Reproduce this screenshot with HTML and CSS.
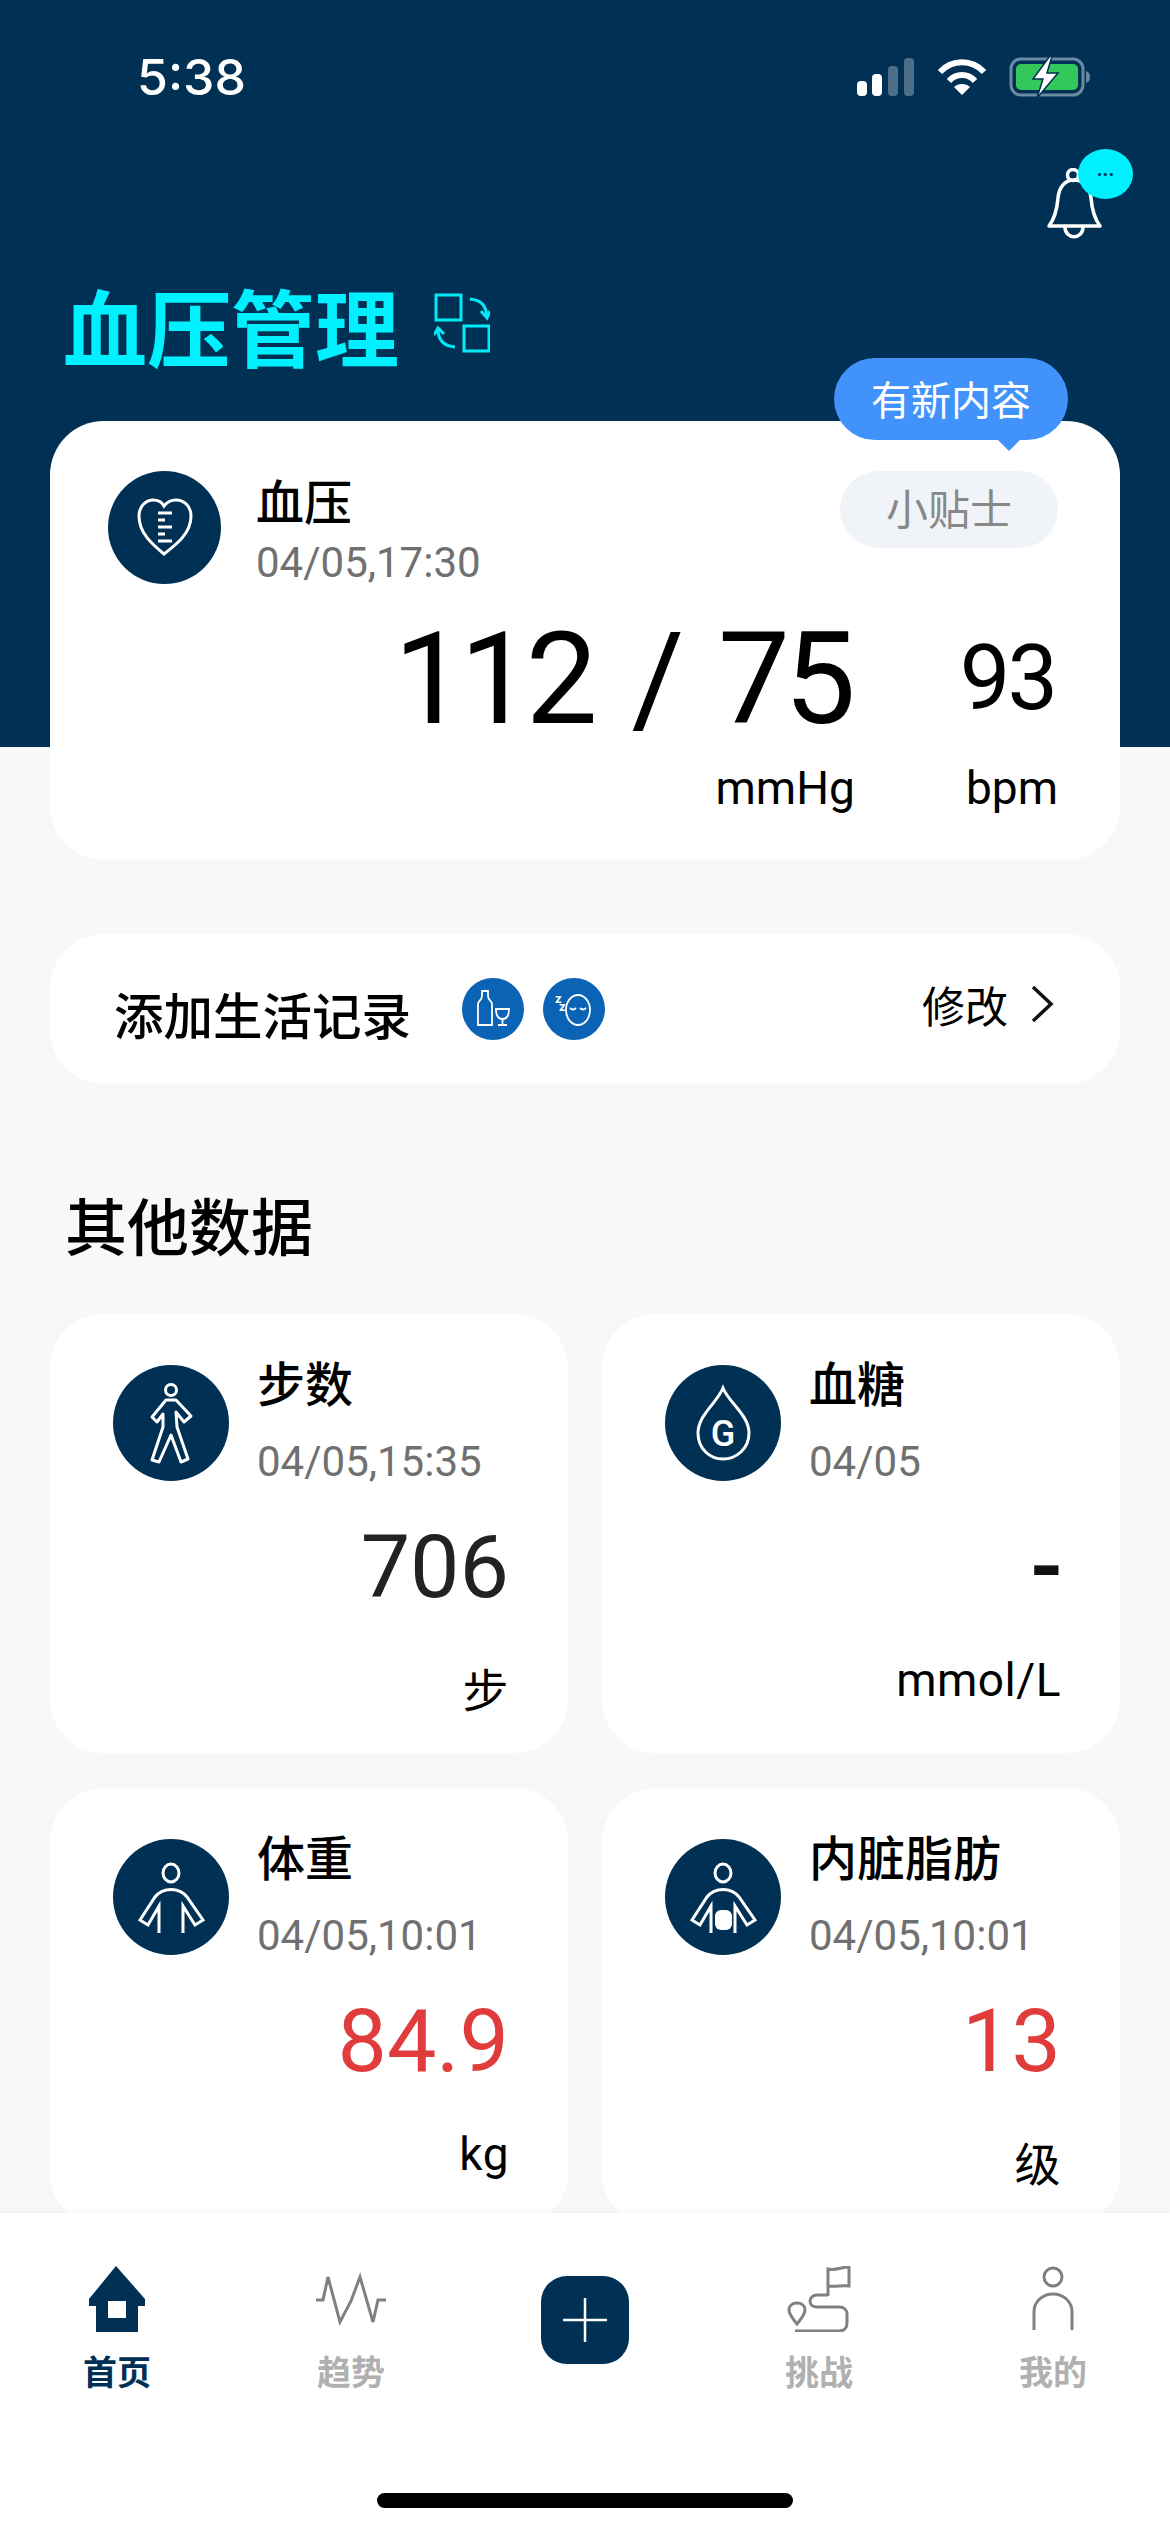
FILE: index.html
```html
<!DOCTYPE html>
<html lang="zh-CN">
<head>
    <meta charset="UTF-8">
    <meta name="viewport" content="width=device-width, initial-scale=1.0">
    <title>血压管理</title>
    <link rel="stylesheet" href="styles.css">
</head>
<body>
    <div class="page">
        <div class="status-bar">
            <span class="time">5:38</span>
            <div class="status-icons">
                <svg width="58" height="38" viewBox="0 0 58 38">
                    <rect x="0" y="23" width="10" height="15" rx="4" fill="#fff"/>
                    <rect x="15" y="16" width="10" height="22" rx="4" fill="#fff"/>
                    <rect x="31" y="8" width="10" height="30" rx="4" fill="#4d6f89"/>
                    <rect x="47" y="0" width="10" height="38" rx="4" fill="#4d6f89"/>
                </svg>
                <svg class="wifi" width="50" height="38" viewBox="0 0 50 38" fill="none" stroke="#fff" stroke-width="6">
                    <path d="M3 14C15 1 35 1 47 14"/>
                    <path d="M12 23C19 15 31 15 38 23"/>
                    <path d="M25 37L17 29C21 25 29 25 33 29Z" fill="#fff" stroke="none"/>
                </svg>
                <svg width="82" height="40" viewBox="0 0 82 40">
                    <rect x="2" y="2" width="72" height="36" rx="10" fill="none" stroke="#6c8aa2" stroke-width="3"/>
                    <rect x="7" y="7" width="62" height="26" rx="5" fill="#34c759"/>
                    <path d="M77 14C80 15 81 17 81 20C81 23 80 25 77 26Z" fill="#6c8aa2"/>
                    <path d="M41 -1L24 22H34L28 41L49 16H38L43 -1Z" fill="#fff" stroke="#003053" stroke-width="1.500"/>
                </svg>
            </div>
        </div>

        <div class="bell-row">
            <div class="bell">
                <svg width="55" height="71" viewBox="0 0 55 71" fill="none" stroke="#fff" stroke-width="3.5">
                    <circle cx="26" cy="7" r="5.5"/>
                    <path d="M2 58C8 50 10 42 11 30C12 19 18 12 27 12C36 12 43 19 44 30C45 42 47 50 53 58Z" stroke-linejoin="round"/>
                    <path d="M18 59C18 72 36 72 36 59"/>
                </svg>
                <span class="bell-badge">...</span>
            </div>
        </div>

        <div class="title-row">
            <h1>血压管理</h1>
            <svg width="56" height="60" viewBox="0 0 56 60" fill="none" stroke="#00eaf8" stroke-width="3">
                <rect x="2" y="2" width="25" height="25"/>
                <rect x="30" y="33" width="25" height="25"/>
                <path d="M36 6C47 7 52 12 53 24"/>
                <path d="M47 18L53 25L56 18"/>
                <path d="M21 54C9 53 4 47 4 36"/>
                <path d="M0 42L4 35L10 41"/>
            </svg>
        </div>

        <main class="content">
            <section class="card hero">
                <span class="new-bubble">有新内容</span>
                <div class="card-head">
                    <div class="icon-circle hero-icon">
                        <svg width="113" height="113" viewBox="0 0 113 113" fill="none" stroke="#fff" stroke-width="3">
                            <path d="M56 83C44 73 31 62 31 45C31 35 38 29 45 29C50 29 54 31 56 35C59 31 63 29 68 29C76 29 83 35 83 45C83 62 69 73 56 83Z"/>
                            <path d="M50 42H64M50 49H57M50 56H64M50 63H57M50 70H64"/>
                        </svg>
                    </div>
                    <div class="head-text">
                        <div class="item-name">血压</div>
                        <div class="item-time">04/05,17:30</div>
                    </div>
                    <span class="tips">小贴士</span>
                </div>
                <div class="hero-values">
                    <div class="hero-col">
                        <div class="big-value">112 / 75</div>
                        <div class="hero-unit">mmHg</div>
                    </div>
                    <div class="hero-col">
                        <div class="big-value small">93</div>
                        <div class="hero-unit">bpm</div>
                    </div>
                </div>
            </section>

            <section class="card life">
                <span class="life-title">添加生活记录</span>
                <div class="life-icon">
                    <svg width="62" height="62" viewBox="0 0 62 62" fill="none" stroke="#fff" stroke-width="1.8">
                        <path d="M16 47V26C16 23 20 22 20 18V13H26V18C26 22 30 23 30 26V47Z"/>
                        <path d="M34 31H47C47 37 45 41 40.500 41C36 41 34 37 34 31ZM40.500 41V47M36 47H45"/>
                    </svg>
                </div>
                <div class="life-icon">
                    <svg width="62" height="62" viewBox="0 0 62 62" fill="none" stroke="#fff" stroke-width="1.8">
                        <ellipse cx="35" cy="32" rx="12" ry="15"/>
                        <path d="M27 30C29 32 31 32 33 30M37 30C39 32 41 32 43 30"/>
                        <text class="zzz" x="12" y="25">z</text>
                        <text class="zzz" x="16" y="33">z</text>
                    </svg>
                </div>
                <span class="edit">修改</span>
                <svg class="chevron" width="24" height="38" viewBox="0 0 24 38" fill="none" stroke="#111" stroke-width="3.500">
                    <path d="M3 2L21 19L3 36"/>
                </svg>
            </section>

            <h2>其他数据</h2>

            <div class="data-grid">
                <section class="card data-card">
                    <div class="card-head">
                        <div class="icon-circle">
                            <svg width="116" height="116" viewBox="0 0 116 116" fill="none" stroke="#fff" stroke-width="3">
                                <circle cx="58" cy="25" r="5.500"/>
                                <path d="M53 35L39 52L44 57L50 49V62L39 95L46 97L58 70L68 97L75 94L64 62L63 47L71 57L78 51L63 35Z" stroke-linejoin="round"/>
                            </svg>
                        </div>
                        <div class="head-text">
                            <div class="item-name">步数</div>
                            <div class="item-time">04/05,15:35</div>
                        </div>
                    </div>
                    <div class="value">706</div>
                    <div class="unit unit-cn">步</div>
                </section>

                <section class="card data-card">
                    <div class="card-head">
                        <div class="icon-circle">
                            <svg width="116" height="116" viewBox="0 0 116 116" fill="none" stroke="#fff" stroke-width="3">
                                <path d="M58 23C52 38 33 50 33 68C33 84 45 94 58 94C71 94 84 84 84 68C84 50 64 38 58 23Z"/>
                                <text class="drop-g" x="58" y="81">G</text>
                            </svg>
                        </div>
                        <div class="head-text">
                            <div class="item-name">血糖</div>
                            <div class="item-time">04/05</div>
                        </div>
                    </div>
                    <div class="value dash">-</div>
                    <div class="unit">mmol/L</div>
                </section>

                <section class="card data-card">
                    <div class="card-head">
                        <div class="icon-circle">
                            <svg width="116" height="116" viewBox="0 0 116 116" fill="none" stroke="#fff" stroke-width="3">
                                <ellipse cx="58" cy="34" rx="8" ry="9"/>
                                <path d="M46 94V67L35 86L27 81L42 58C50 48 66 48 74 58L90 81L82 86L70 67V94"/>
                            </svg>
                        </div>
                        <div class="head-text">
                            <div class="item-name">体重</div>
                            <div class="item-time">04/05,10:01</div>
                        </div>
                    </div>
                    <div class="value alert">84.9</div>
                    <div class="unit">kg</div>
                </section>

                <section class="card data-card">
                    <div class="card-head">
                        <div class="icon-circle">
                            <svg width="116" height="116" viewBox="0 0 116 116" fill="none" stroke="#fff" stroke-width="3">
                                <ellipse cx="58" cy="34" rx="8" ry="9"/>
                                <path d="M46 94V67L35 86L27 81L42 58C50 48 66 48 74 58L90 81L82 86L70 67V94"/>
                                <rect x="50" y="71" width="17" height="20" rx="6" fill="#fff" stroke="none"/>
                            </svg>
                        </div>
                        <div class="head-text">
                            <div class="item-name">内脏脂肪</div>
                            <div class="item-time">04/05,10:01</div>
                        </div>
                    </div>
                    <div class="value alert">13</div>
                    <div class="unit unit-cn">级</div>
                </section>
            </div>
        </main>

        <nav class="tabbar">
            <div class="tabs">
                <div class="tab active">
                    <svg width="56" height="66" viewBox="0 0 56 66">
                        <path d="M27 0L56 33V40H49V66H7V40H0V33Z" fill="#003053"/>
                        <rect x="19" y="35" width="18" height="17" fill="#fff"/>
                    </svg>
                    <span>首页</span>
                </div>
                <div class="tab">
                    <svg width="70" height="66" viewBox="0 0 70 50" fill="none" stroke="#808080" stroke-width="3">
                        <path d="M0 26H7L12 3L24 48L35 27L44 3L57 48L62 26H70"/>
                    </svg>
                    <span>趋势</span>
                </div>
                <div class="tab">
                    <div class="add-btn">
                        <svg width="44" height="44" viewBox="0 0 44 44" stroke="#fff" stroke-width="2.500">
                            <path d="M0 22H44M22 0V44"/>
                        </svg>
                    </div>
                </div>
                <div class="tab">
                    <svg width="64" height="66" viewBox="0 0 64 66" fill="none" stroke="#808080" stroke-width="3">
                        <path d="M41 30V3C48 5 55 1 62 1V20C55 19 48 21 41 20"/>
                        <path d="M41 29H30C26 29 23 32 23 35C23 39 26 41 30 41H52C57 41 60 44 60 48V57C60 62 57 65 52 65H8"/>
                        <path d="M10 58C5 52 2 48 2 44C2 40 5 37 10 37C15 37 18 40 18 44C18 48 15 52 10 58Z"/>
                    </svg>
                    <span>挑战</span>
                </div>
                <div class="tab">
                    <svg width="42" height="66" viewBox="0 0 42 66" fill="none" stroke="#808080" stroke-width="3">
                        <circle cx="21" cy="11" r="9"/>
                        <path d="M2 64V46C2 36 10 28 21 28C32 28 40 36 40 46V64"/>
                    </svg>
                    <span>我的</span>
                </div>
            </div>
            <div class="home-bar"></div>
        </nav>
    </div>
</body>
</html>
```

FILE: styles.css
```css
* {
    box-sizing: border-box;
}

body {
    margin: 0;
    font-family: Roboto, "Noto Sans CJK SC", sans-serif;
    color: #000;
}

.page {
    width: 1170px;
    height: 2532px;
    display: flex;
    flex-direction: column;
    overflow: hidden;
    background: linear-gradient(#003053 747px, #f6f8fa 747px);
}

/* status bar */
.status-bar {
    height: 154px;
    flex: none;
    display: flex;
    align-items: center;
    justify-content: space-between;
    padding: 0 79px 0 137px;
}

.time {
    font-family: Inter, sans-serif;
    font-size: 50px;
    font-weight: 500;
    color: #fff;
}

.status-icons {
    display: flex;
    align-items: center;
    gap: 22px;
}

/* header */
.bell-row {
    flex: none;
    height: 96px;
    padding: 14px 68px 0 0;
    display: flex;
    justify-content: flex-end;
}

.bell {
    position: relative;
    width: 55px;
    height: 71px;
}

.bell-badge {
    position: absolute;
    left: 31px;
    top: -19px;
    width: 55px;
    height: 50px;
    border-radius: 50%;
    background-color: #00f0ff;
    color: #003053;
    font-size: 20px;
    font-weight: 700;
    line-height: 40px;
    text-align: center;
}

.title-row {
    flex: none;
    height: 171px;
    padding: 38px 0 0 63px;
    display: flex;
    align-items: flex-start;
    gap: 35px;
}

h1 {
    margin: 0;
    font-size: 84px;
    font-weight: 700;
    line-height: 90px;
    color: #00f0ff;
}

.title-row svg {
    margin-top: 5px;
}

/* cards */
.content {
    flex: 1;
    min-height: 0;
    padding: 0 50px;
}

.card {
    background-color: #fff;
    border-radius: 54px;
}

.hero {
    position: relative;
    height: 439px;
    padding: 50px 62px 0 58px;
}

.new-bubble {
    position: absolute;
    right: 52px;
    top: -63px;
    width: 234px;
    height: 82px;
    border-radius: 41px;
    background-color: #4193fb;
    color: #fff;
    font-size: 40px;
    line-height: 88px;
    text-align: center;
}

.new-bubble::after {
    content: "";
    position: absolute;
    left: 162px;
    top: 80px;
    border-left: 13px solid transparent;
    border-right: 13px solid transparent;
    border-top: 13px solid #4193fb;
}

.card-head {
    display: flex;
    align-items: flex-start;
}

.icon-circle {
    flex: none;
    width: 116px;
    height: 116px;
    margin-right: 28px;
    border-radius: 50%;
    background-color: #003053;
}

.icon-circle svg {
    display: block;
}

.hero-icon {
    width: 113px;
    height: 113px;
    margin-right: 35px;
}

.head-text {
    flex: 1;
}

.data-card .head-text {
    margin-top: -4px;
    text-align: left;
}

.hero .head-text {
    padding-top: 8px;
}

.item-name {
    font-size: 48px;
    font-weight: 500;
    line-height: 50px;
}

.item-time {
    margin-top: 26px;
    font-size: 42px;
    line-height: 50px;
    color: #707070;
}

.hero .item-time {
    margin-top: 9px;
}

.tips {
    flex: none;
    width: 218px;
    height: 77px;
    border-radius: 39px;
    background-color: #f0f4f9;
    color: #888;
    font-size: 42px;
    line-height: 80px;
    text-align: center;
}

.hero-values {
    display: flex;
    justify-content: flex-end;
    gap: 105px;
    margin-top: 26px;
}

.hero-col {
    text-align: right;
}

.big-value {
    padding-right: 5px;
    font-size: 128px;
    letter-spacing: -6px;
    word-spacing: 14px;
    line-height: 130px;
    height: 130px;
    white-space: pre;
}

.big-value.small {
    padding-right: 3px;
    font-size: 90px;
    letter-spacing: -3px;
}

.hero-unit {
    margin-top: 14px;
    font-size: 46px;
    line-height: 60px;
}

.life {
    height: 150px;
    margin-top: 74px;
    padding: 0 66px 0 64px;
    display: flex;
    align-items: center;
}

.life-title {
    font-size: 49.5px;
    font-weight: 500;
    margin: 9px 48px 0 0;
    width: 300px;
    white-space: nowrap;
}

.life-icon {
    width: 62px;
    height: 62px;
    margin-right: 19px;
    border-radius: 50%;
    background-color: #0a63b5;
}

.life-icon svg {
    display: block;
}

.zzz {
    font-size: 13px;
    font-weight: 700;
    fill: #fff;
    stroke: none;
}

.edit {
    margin: -10px 22px 0 auto;
    font-size: 43px;
}

.chevron {
    margin-top: -10px;
}

h2 {
    margin: 106px 0 0 15px;
    font-size: 62px;
    font-weight: 500;
    line-height: 80px;
}

.data-grid {
    display: grid;
    grid-template-columns: 518px 518px;
    column-gap: 34px;
    row-gap: 35px;
    margin-top: 44px;
}

.data-card {
    height: 439px;
    padding: 51px 59px 0 63px;
    text-align: right;
}

.value {
    margin-top: 35px;
    font-size: 88px;
    line-height: 90px;
    color: #222;
}

.value.alert {
    color: #e03c3c;
}

.value.dash {
    margin-right: -3px;
    font-weight: 700;
    color: #111;
}

.unit {
    margin-top: 38px;
    font-size: 46px;
    letter-spacing: 0.5px;
    line-height: 60px;
}

.unit.unit-cn {
    margin-top: 49px;
}

.drop-g {
    font-size: 36px;
    font-weight: 500;
    fill: #fff;
    stroke: none;
    text-anchor: middle;
}

/* tab bar */
.tabbar {
    flex: none;
    height: 319px;
    background-color: #fff;
    box-shadow: 0 -2px 8px rgba(0, 0, 0, 0.04);
    display: flex;
    flex-direction: column;
    position: relative;
}

.tabs {
    display: grid;
    grid-template-columns: repeat(5, 1fr);
    padding-top: 53px;
}

.tab {
    display: flex;
    flex-direction: column;
    align-items: center;
    font-size: 34px;
    font-weight: 700;
    line-height: 40px;
    color: #b0b0b0;
}

.tab span {
    margin-top: 21px;
}

.tab.active {
    color: #003053;
}

.add-btn {
    width: 88px;
    height: 88px;
    margin-top: 10px;
    border-radius: 26px;
    background-color: #003053;
    display: flex;
    align-items: center;
    justify-content: center;
}

.home-bar {
    width: 416px;
    height: 15px;
    margin: auto auto 24px;
    border-radius: 8px;
    background-color: #000;
}
```
